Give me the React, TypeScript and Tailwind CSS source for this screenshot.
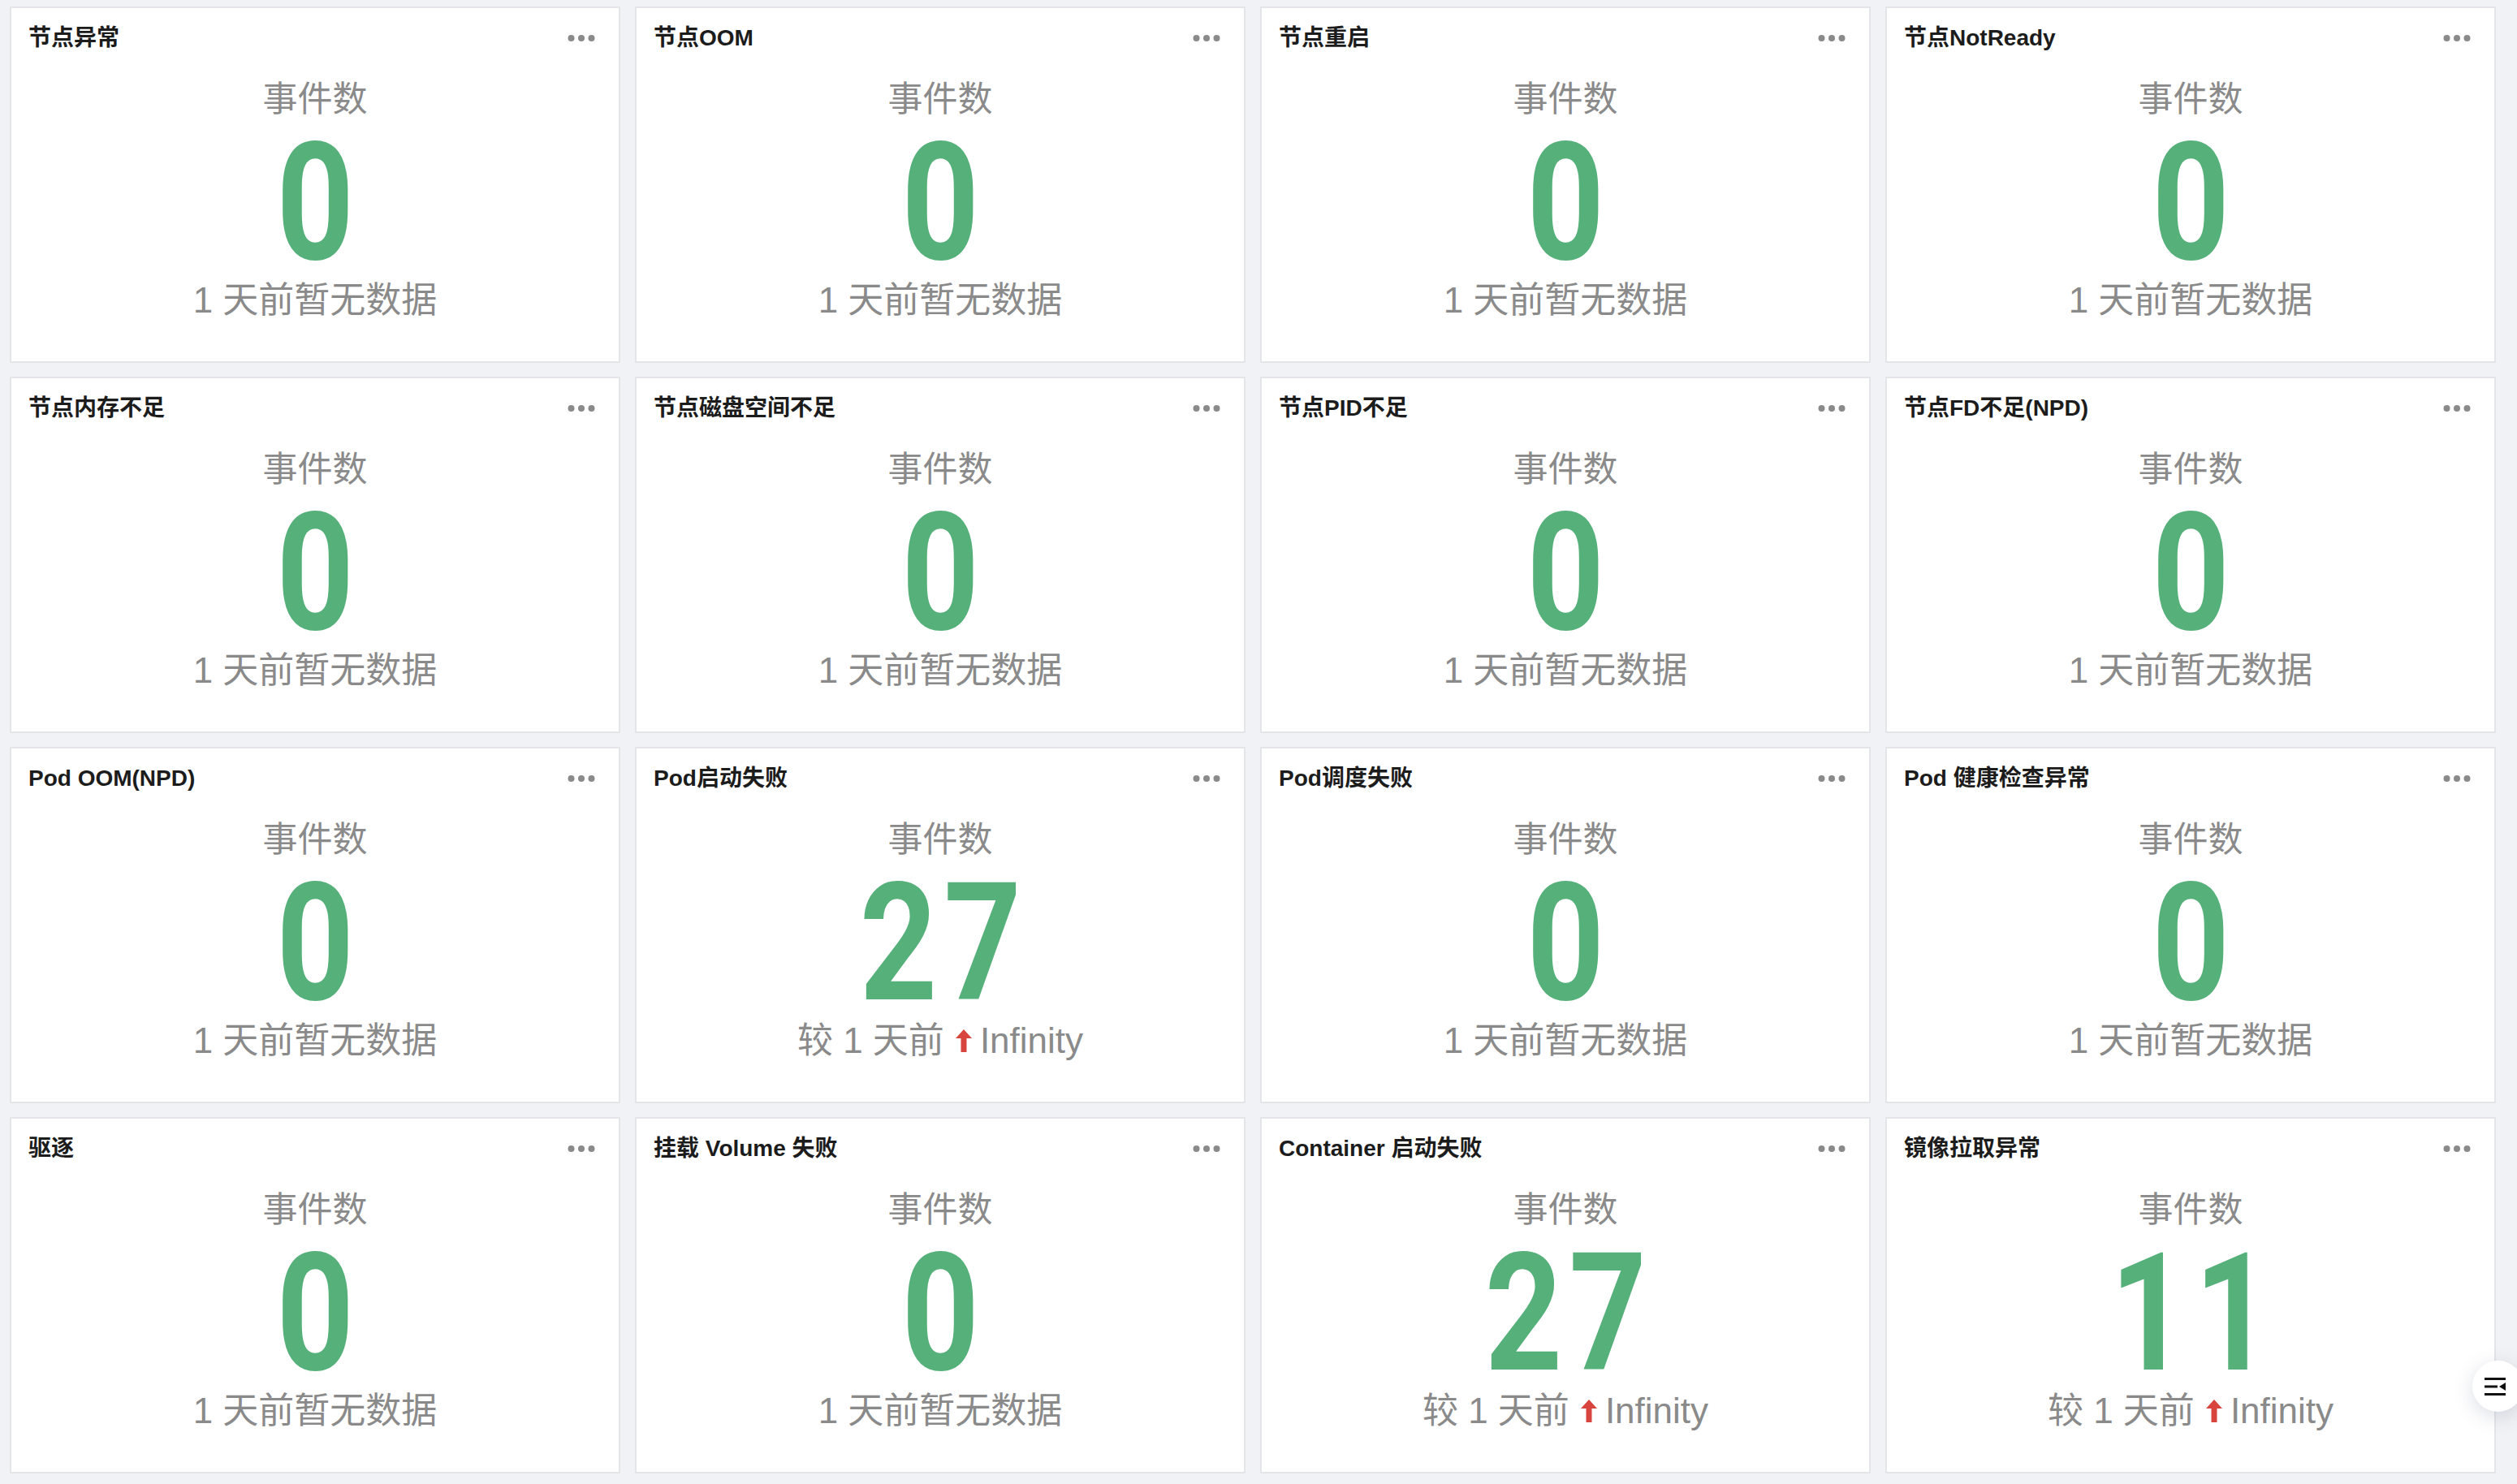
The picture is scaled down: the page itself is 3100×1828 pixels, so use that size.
import React from "react";

type Stat = {
  title: string;
  value: number;
  change?: boolean;
};

const stats: Stat[] = [
  { title: "节点异常", value: 0 },
  { title: "节点OOM", value: 0 },
  { title: "节点重启", value: 0 },
  { title: "节点NotReady", value: 0 },
  { title: "节点内存不足", value: 0 },
  { title: "节点磁盘空间不足", value: 0 },
  { title: "节点PID不足", value: 0 },
  { title: "节点FD不足(NPD)", value: 0 },
  { title: "Pod OOM(NPD)", value: 0 },
  { title: "Pod启动失败", value: 27, change: true },
  { title: "Pod调度失败", value: 0 },
  { title: "Pod 健康检查异常", value: 0 },
  { title: "驱逐", value: 0 },
  { title: "挂载 Volume 失败", value: 0 },
  { title: "Container 启动失败", value: 27, change: true },
  { title: "镜像拉取异常", value: 11, change: true },
];

function Dots() {
  return (
    <svg width="34" height="10" viewBox="0 0 34 10" aria-hidden>
      <circle cx="4.5" cy="5" r="4" fill="#8a8a8a" />
      <circle cx="17" cy="5" r="4" fill="#8a8a8a" />
      <circle cx="29.5" cy="5" r="4" fill="#8a8a8a" />
    </svg>
  );
}

function UpArrow() {
  return (
    <svg width="20" height="28" viewBox="0 0 20 28" aria-hidden className="inline-block">
      <polygon points="10,0 20,11 0,11" fill="#d8453e" />
      <rect x="6.5" y="10" width="7" height="18" fill="#d8453e" />
    </svg>
  );
}

function StatCard({ stat }: { stat: Stat }) {
  return (
    <div className="h-[439px] bg-white border-2 border-[#e3e5e9] flex flex-col">
      <div className="h-[74px] shrink-0 flex items-center justify-between pl-[21px] pr-[29px]">
        <span className="text-[28px] font-bold text-[#1c1c1c] font-['Liberation_Sans','Noto_Sans_CJK_SC',sans-serif]">
          {stat.title}
        </span>
        <Dots />
      </div>
      <div className="flex flex-col items-center text-[#8a8a8a] font-['Liberation_Sans','Noto_Sans_CJK_SC',sans-serif]">
        <div className="mt-[16px] text-[43px] leading-[44px]">事件数</div>
        <div className="mt-[4px] h-[205px] pl-[10px] text-[203px] leading-[205px] font-bold text-[#56b07a] font-['Roboto',sans-serif] tracking-[10px] scale-x-[0.82]">
          {stat.value}
        </div>
        {stat.change ? (
          <div className="mt-[-5px] flex items-center text-[44px] leading-[44px]">
            <span>较 1 天前</span>
            <span className="ml-[14px] mr-[10px] flex items-center">
              <UpArrow />
            </span>
            <span>Infinity</span>
          </div>
        ) : (
          <div className="mt-[-5px] text-[44px] leading-[44px]">1 天前暂无数据</div>
        )}
      </div>
    </div>
  );
}

export default function App() {
  return (
    <div className="min-h-screen w-full bg-[#f1f2f5] pl-[12px] pt-[8px] pb-[12px] relative">
      <div className="grid grid-cols-[repeat(4,752px)] gap-x-[18px] gap-y-[17px]">
        {stats.map((s) => (
          <StatCard key={s.title} stat={s} />
        ))}
      </div>
      <button className="fixed right-[-8px] top-[1676px] w-[63px] h-[63px] rounded-full bg-white shadow-[0_6px_24px_rgba(60,70,110,0.18)] flex items-center justify-center pr-[6px]">
        <svg width="28" height="24" viewBox="0 0 28 24" aria-hidden>
          <rect x="0" y="1" width="26" height="3" fill="#111" />
          <rect x="0" y="10.5" width="16" height="3" fill="#111" />
          <polygon points="18,12 26,7 26,17" fill="#111" />
          <rect x="0" y="20" width="26" height="3" fill="#111" />
        </svg>
      </button>
    </div>
  );
}
